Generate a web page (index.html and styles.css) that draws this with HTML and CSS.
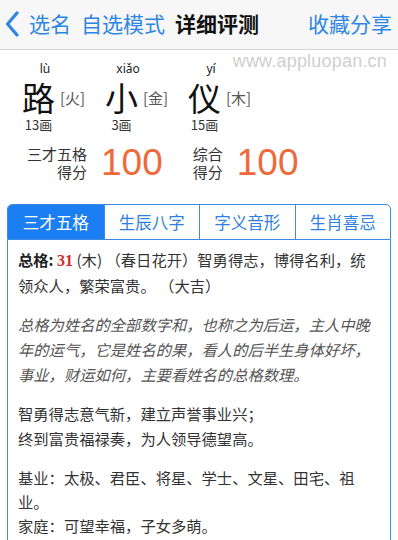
FILE: index.html
```html
<!DOCTYPE html>
<html lang="zh-CN">
<head>
<meta charset="utf-8">
<title>详细评测</title>
<link rel="stylesheet" href="styles.css">
</head>
<body>
<div class="nav">
  <svg class="back" width="16" height="26" viewBox="0 0 16 26"><polyline points="13,2 3.5,13 13,24" fill="none" stroke="#2f86e2" stroke-width="3.2" stroke-linecap="round" stroke-linejoin="round"/></svg>
  <span class="nav-link first">选名</span>
  <span class="nav-link">自选模式</span>
  <span class="nav-title">详细评测</span>
  <span class="nav-link right">收藏分享</span>
</div>
<div class="header">
  <div class="watermark">www.appluopan.cn</div>
  <div class="chars">
    <div class="unit">
      <div class="col"><div class="py">lù</div><div class="hz">路</div><div class="bh">13画</div></div>
      <div class="wx">[火]</div>
    </div>
    <div class="unit">
      <div class="col"><div class="py">xiǎo</div><div class="hz">小</div><div class="bh">3画</div></div>
      <div class="wx">[金]</div>
    </div>
    <div class="unit">
      <div class="col"><div class="py">yí</div><div class="hz">仪</div><div class="bh">15画</div></div>
      <div class="wx">[木]</div>
    </div>
  </div>
  <div class="scores">
    <div class="score">
      <div class="label">三才五格<br>得分</div>
      <div class="num">100</div>
    </div>
    <div class="score second">
      <div class="label">综合<br>得分</div>
      <div class="num">100</div>
    </div>
  </div>
</div>
<div class="panel">
  <div class="tabs">
    <div class="tab active">三才五格</div>
    <div class="tab">生辰八字</div>
    <div class="tab">字义音形</div>
    <div class="tab">生肖喜忌</div>
  </div>
  <div class="content">
    <p><b>总格:</b> <b class="red">31</b> (木) （春日花开）智勇得志，博得名利，统领众人，繁荣富贵。 （大吉）</p>
    <p class="note">总格为姓名的全部数字和，也称之为后运，主人中晚年的运气，它是姓名的果，看人的后半生身体好坏，事业，财运如何，主要看姓名的总格数理。</p>
    <p>智勇得志意气新，建立声誉事业兴；<br>终到富贵福禄奏，为人领导德望高。</p>
    <p class="last">基业：太极、君臣、将星、学士、文星、田宅、祖业。<br>家庭：可望幸福，子女多萌。</p>
  </div>
</div>
</body>
</html>
```
FILE: styles.css
```css
html, body {
  margin: 0;
  padding: 0;
  background: #fff;
}
body {
  font-family: "Noto Sans CJK SC", "Noto Sans", sans-serif;
  color: #333;
  width: 398px;
  overflow: hidden;
}
.nav {
  height: 49px;
  background: #f7f7f7;
  border-bottom: 1px solid #d6d6d6;
  display: flex;
  align-items: center;
  padding: 0 6px 0 4px;
}
.back {
  display: block;
  margin-right: 9px;
  margin-top: -2px;
}
.nav-link, .nav-title {
  font-size: 21px;
  line-height: 28px;
  margin-right: 10px;
  margin-top: -3px;
}
.nav-link {
  color: #2f86e2;
}
.nav-title {
  color: #111;
  font-weight: bold;
}
.nav-link.right {
  margin-left: auto;
  margin-right: 0;
}
.header {
  position: relative;
}
.watermark {
  position: absolute;
  top: 1px;
  right: 11px;
  font-family: "Liberation Sans", sans-serif;
  font-size: 18px;
  color: #cfcfcf;
  letter-spacing: 0.2px;
}
.chars {
  display: flex;
  padding: 11px 0 0 22px;
}
.unit {
  flex: none;
  width: 83px;
  display: flex;
  align-items: center;
}
.col {
  width: 33px;
  display: flex;
  flex-direction: column;
  align-items: center;
}
.py {
  font-family: "Noto Sans", sans-serif;
  font-size: 12px;
  line-height: 16px;
  padding-left: 13px;
  white-space: nowrap;
  color: #222;
}
.hz {
  font-size: 33px;
  line-height: 36px;
  margin-top: 2px;
  color: #111;
}
.bh {
  font-size: 13px;
  line-height: 14px;
  margin-top: 3px;
  white-space: nowrap;
  color: #333;
}
.wx {
  font-size: 15px;
  color: #555;
  margin-left: 5px;
  margin-top: 1px;
  white-space: nowrap;
}
.scores {
  display: flex;
  padding: 11px 0 0 27px;
}
.score {
  display: flex;
  align-items: center;
}
.score.second {
  margin-left: 30px;
}
.label {
  font-size: 15px;
  line-height: 18px;
  text-align: right;
  color: #333;
}
.num {
  font-family: "Liberation Sans", sans-serif;
  font-size: 37px;
  line-height: 40px;
  color: #ef6a3b;
  margin-left: 14px;
}
.panel {
  margin: 21px 7px 0 7px;
}
.tabs {
  display: grid;
  grid-template-columns: repeat(4, 1fr);
  border: 1.5px solid #3d8ae5;
  border-radius: 5px 5px 0 0;
  overflow: hidden;
  height: 34px;
}
.tab {
  font-size: 16.5px;
  line-height: 34px;
  text-align: center;
  color: #2f80e0;
  border-left: 1.5px solid #3d8ae5;
}
.tab:first-child {
  border-left: none;
}
.tab.active {
  background: #1b7ef2;
  color: #fff;
}
.content {
  border: 1.5px solid #3d8ae5;
  border-top: none;
  padding: 7px 10px 30px 10px;
  font-size: 15.3px;
  line-height: 25px;
  color: #333;
}
.content p {
  margin: 0 0 14px 0;
}
.content p.last {
  line-height: 24px;
}
.content b {
  font-weight: bold;
  color: #222;
}
.content .red {
  font-family: "Liberation Serif", serif;
  color: #d42a2a;
  font-size: 16px;
}
.note {
  font-style: italic;
  color: #555;
}
```
